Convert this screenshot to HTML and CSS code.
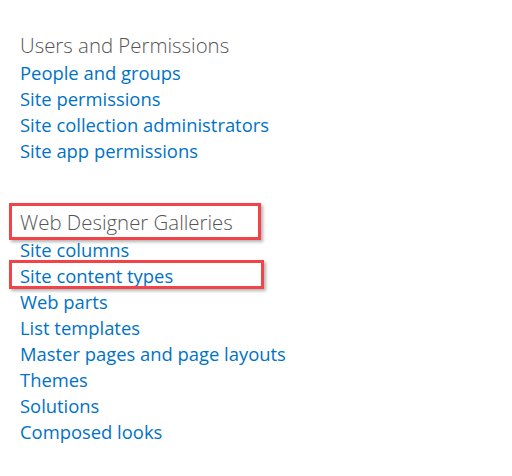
FILE: index.html
```html
<!DOCTYPE html>
<html>
<head>
<meta charset="utf-8">
<link rel="stylesheet" href="styles.css">
</head>
<body>
<div class="page">
  <section class="group">
    <h2 class="group-title">Users and Permissions</h2>
    <ul class="links">
      <li><a href="#">People and groups</a></li>
      <li><a href="#">Site permissions</a></li>
      <li><a href="#">Site collection administrators</a></li>
      <li><a href="#">Site app permissions</a></li>
    </ul>
  </section>
  <section class="group">
    <h2 class="group-title marked"><span class="mark mark-title"></span>Web Designer Galleries</h2>
    <ul class="links">
      <li><a href="#">Site columns</a></li>
      <li class="marked"><span class="mark mark-link"></span><a href="#">Site content types</a></li>
      <li><a href="#">Web parts</a></li>
      <li><a href="#">List templates</a></li>
      <li><a href="#">Master pages and page layouts</a></li>
      <li><a href="#">Themes</a></li>
      <li><a href="#">Solutions</a></li>
      <li><a href="#">Composed looks</a></li>
    </ul>
  </section>
</div>
</body>
</html>
```
FILE: styles.css
```css
html, body {
  margin: 0;
  padding: 0;
  background: #ffffff;
}
body {
  font-family: "Open Sans", "Noto Sans", "Liberation Sans", sans-serif;
}
.page {
  padding: 31px 0 0 20px;
}
.group {
  margin-bottom: 44px;
}
.group-title {
  margin: 0;
  font-size: 20.4px;
  font-weight: 300;
  line-height: 29px;
  color: #555555;
}
.links {
  list-style: none;
  margin: 0;
  padding: 0;
}
.links li {
  line-height: 26px;
  font-size: 18.4px;
}
.links a {
  color: #0072c6;
  text-decoration: none;
}
.marked {
  position: relative;
}
.mark {
  position: absolute;
  border: 3px solid #f24448;
  box-shadow: 2px 2px 3px rgba(0, 0, 0, 0.3);
  pointer-events: none;
}
.mark-title {
  left: -11px;
  top: -5px;
  width: 246px;
  height: 31px;
}
.mark-link {
  left: -11px;
  top: -3px;
  width: 249px;
  height: 23px;
}
```
